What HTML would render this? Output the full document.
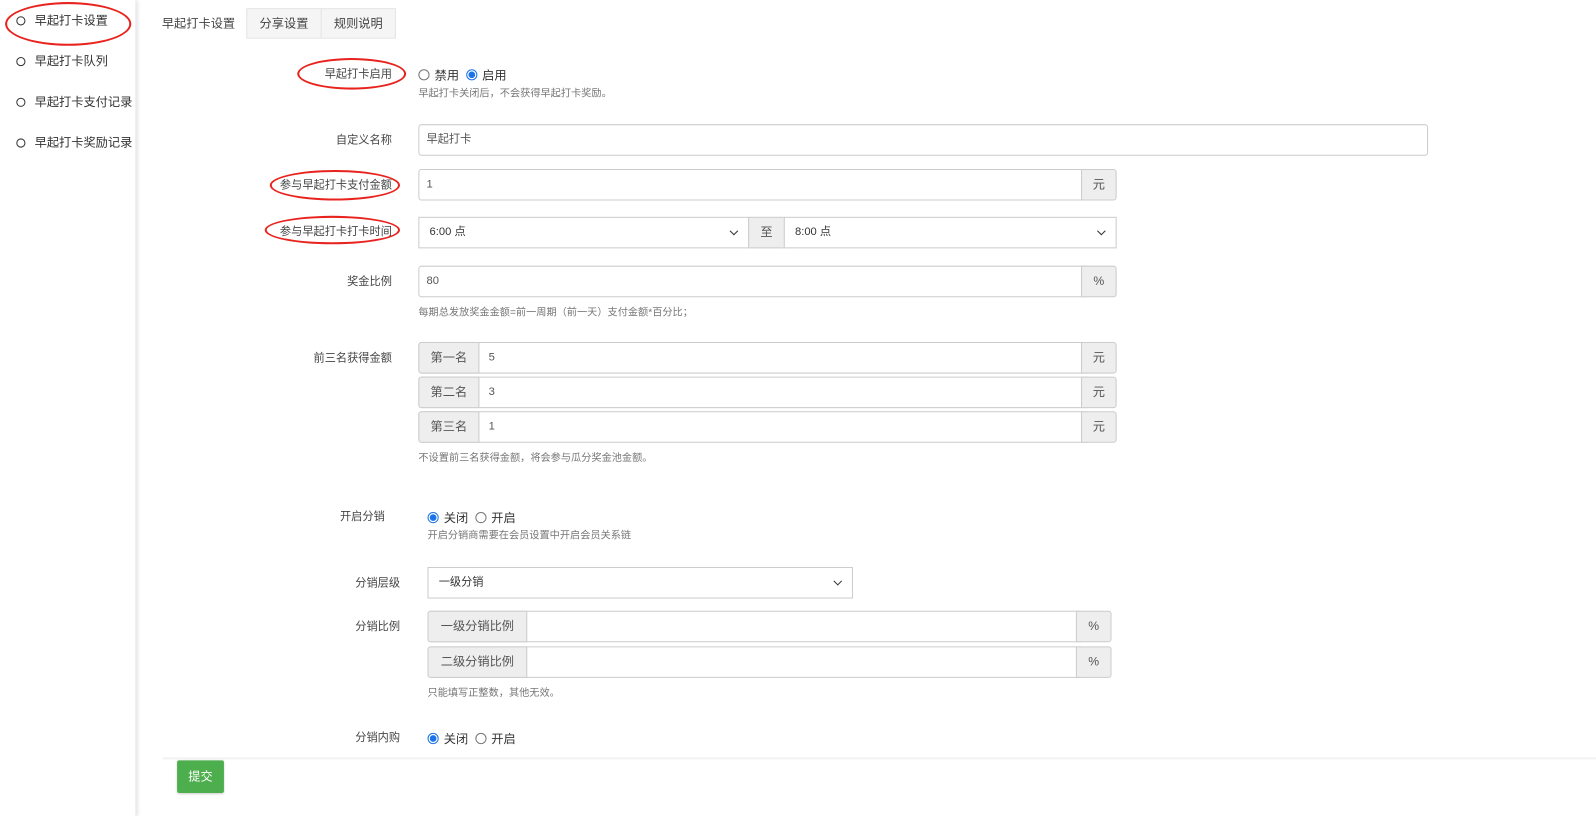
<!DOCTYPE html>
<html><head><meta charset="utf-8"><style>
*{box-sizing:border-box;margin:0;padding:0}
body{width:1596px;height:802px;background:#fff;font-family:"Liberation Sans","Noto Sans CJK SC",sans-serif;color:#333;position:relative;overflow:hidden}
#w{position:absolute;left:0;top:0;width:1568px;height:790px;transform:scale(1.0179);transform-origin:0 0}
.a{position:absolute}
.side{left:0;top:0;width:133px;height:802px;box-shadow:2px 0 4px rgba(0,0,0,.12);background:#fff}
.si{position:absolute;left:16px;font-size:12px;color:#333;white-space:nowrap}
.si i{display:inline-block;width:9px;height:9px;border:1.5px solid #333;border-radius:50%;margin-right:9px;vertical-align:-1px}
.tab{top:8px;height:30px;font-size:12px;line-height:29px;text-align:center;border:1px solid #e5e5e5;background:#f5f5f5;color:#444}
.lbl{font-size:11px;color:#444;text-align:right;width:230px;white-space:nowrap}
.help{font-size:10px;color:#777;white-space:nowrap}
.inp{height:31px;border:1px solid #ccc;border-radius:3px;font-size:11px;line-height:29px;padding-left:7px;color:#555;background:#fff}
.add{height:31px;border:1px solid #ccc;background:#eee;font-size:12px;line-height:29px;text-align:center;color:#555}
.sel{height:31px;border:1px solid #ccc;font-size:11px;line-height:29px;padding-left:10px;color:#333;background:#fff}
.sel:after{content:"";position:absolute;right:11px;top:10px;width:5px;height:5px;border-right:1.5px solid #333;border-bottom:1.5px solid #333;transform:rotate(45deg)}
.rad{font-size:12px;color:#333;white-space:nowrap}
.r{display:inline-block;width:11px;height:11px;border:1px solid #777;border-radius:50%;vertical-align:-1px;margin-right:5px}
.r.on{border:1px solid #1a73e8;background:radial-gradient(circle,#1a73e8 0 3px,#fff 3.5px)}
.ell{border:2px solid #e8231e;border-radius:50%}
</style></head><body><div id="w">
<div class="a side"></div>
<div class="si" style="top:11px"><i></i>早起打卡设置</div>
<div class="si" style="top:51px"><i></i>早起打卡队列</div>
<div class="si" style="top:91px"><i></i>早起打卡支付记录</div>
<div class="si" style="top:131px"><i></i>早起打卡奖励记录</div>
<div class="a ell" style="left:5px;top:2px;width:124px;height:43px"></div>

<div class="a tab" style="left:147px;width:96px;background:#fff;border-color:#fff #e5e5e5 #fff #fff">早起打卡设置</div>
<div class="a tab" style="left:242px;width:74px">分享设置</div>
<div class="a tab" style="left:315px;width:74px">规则说明</div>

<div class="a lbl" style="left:155px;top:64px">早起打卡启用</div>
<div class="a ell" style="left:292px;top:57px;width:107px;height:31px"></div>
<div class="a rad" style="left:411px;top:65px"><span class="r"></span>禁用 &nbsp;<span class="r on"></span>启用</div>
<div class="a help" style="left:411px;top:83px">早起打卡关闭后，不会获得早起打卡奖励。</div>

<div class="a lbl" style="left:155px;top:129px">自定义名称</div>
<div class="a inp" style="left:411px;top:122px;width:992px">早起打卡</div>

<div class="a lbl" style="left:155px;top:173px">参与早起打卡支付金额</div>
<div class="a ell" style="left:265px;top:167px;width:128px;height:30px"></div>
<div class="a inp" style="left:411px;top:166px;width:660px">1</div>
<div class="a add" style="left:1062px;top:166px;width:35px;border-radius:0 3px 3px 0">元</div>

<div class="a lbl" style="left:155px;top:219px">参与早起打卡打卡时间</div>
<div class="a ell" style="left:260px;top:212px;width:133px;height:28px"></div>
<div class="a sel" style="left:411px;top:213px;width:325px">6:00 点</div>
<div class="a add" style="left:735px;top:213px;width:36px">至</div>
<div class="a sel" style="left:770px;top:213px;width:327px">8:00 点</div>

<div class="a lbl" style="left:155px;top:268px">奖金比例</div>
<div class="a inp" style="left:411px;top:261px;width:660px">80</div>
<div class="a add" style="left:1062px;top:261px;width:35px;border-radius:0 3px 3px 0">%</div>
<div class="a help" style="left:411px;top:298px">每期总发放奖金金额=前一周期（前一天）支付金额*百分比；</div>

<div class="a lbl" style="left:155px;top:343px">前三名获得金额</div>
<div class="a inp" style="left:411px;top:336px;width:660px;padding-left:68px">5</div>
<div class="a add" style="left:411px;top:336px;width:60px;border-radius:3px 0 0 3px">第一名</div>
<div class="a add" style="left:1062px;top:336px;width:35px;border-radius:0 3px 3px 0">元</div>
<div class="a inp" style="left:411px;top:370px;width:660px;padding-left:68px">3</div>
<div class="a add" style="left:411px;top:370px;width:60px;border-radius:3px 0 0 3px">第二名</div>
<div class="a add" style="left:1062px;top:370px;width:35px;border-radius:0 3px 3px 0">元</div>
<div class="a inp" style="left:411px;top:404px;width:660px;padding-left:68px">1</div>
<div class="a add" style="left:411px;top:404px;width:60px;border-radius:3px 0 0 3px">第三名</div>
<div class="a add" style="left:1062px;top:404px;width:35px;border-radius:0 3px 3px 0">元</div>
<div class="a help" style="left:411px;top:441px">不设置前三名获得金额，将会参与瓜分奖金池金额。</div>

<div class="a lbl" style="left:148px;top:499px">开启分销</div>
<div class="a rad" style="left:420px;top:500px"><span class="r on"></span>关闭 &nbsp;<span class="r"></span>开启</div>
<div class="a help" style="left:420px;top:517px">开启分销商需要在会员设置中开启会员关系链</div>

<div class="a lbl" style="left:163px;top:564px">分销层级</div>
<div class="a sel" style="left:420px;top:557px;width:418px">一级分销</div>

<div class="a lbl" style="left:163px;top:607px">分销比例</div>
<div class="a inp" style="left:420px;top:600px;width:645px"></div>
<div class="a add" style="left:420px;top:600px;width:98px;border-radius:3px 0 0 3px">一级分销比例</div>
<div class="a add" style="left:1057px;top:600px;width:35px;border-radius:0 3px 3px 0">%</div>
<div class="a inp" style="left:420px;top:635px;width:645px"></div>
<div class="a add" style="left:420px;top:635px;width:98px;border-radius:3px 0 0 3px">二级分销比例</div>
<div class="a add" style="left:1057px;top:635px;width:35px;border-radius:0 3px 3px 0">%</div>
<div class="a help" style="left:420px;top:672px">只能填写正整数，其他无效。</div>

<div class="a lbl" style="left:163px;top:716px">分销内购</div>
<div class="a rad" style="left:420px;top:717px"><span class="r on"></span>关闭 &nbsp;<span class="r"></span>开启</div>

<div class="a" style="left:160px;top:744px;width:1436px;height:2px;background:#f2f2f2"></div>
<div class="a" style="left:174px;top:747px;width:46px;height:32px;background:#4cae4c;border-radius:2px;color:#fff;font-size:12px;line-height:32px;text-align:center;box-shadow:0 1px 2px rgba(0,0,0,.2)">提交</div>
</div></body></html>
